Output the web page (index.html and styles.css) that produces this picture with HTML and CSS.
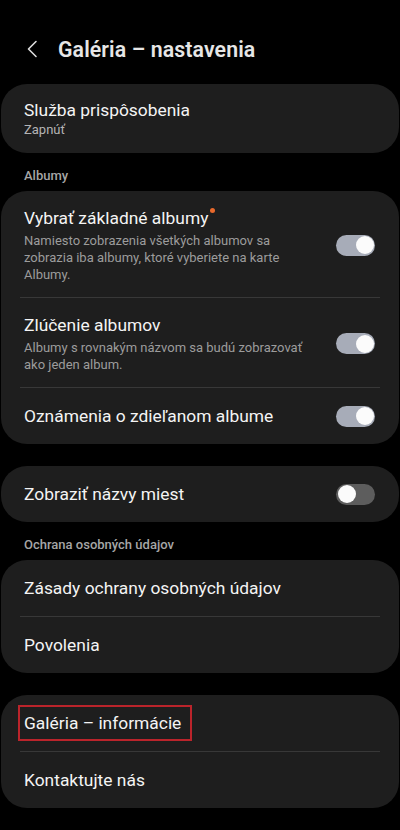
FILE: index.html
```html
<!DOCTYPE html>
<html lang="sk">
<head>
<meta charset="utf-8">
<title>Galéria – nastavenia</title>
<link rel="stylesheet" href="styles.css">
</head>
<body>
<div class="screen">
  <header class="appbar">
    <svg class="back" width="14" height="18" viewBox="0 0 14 18" aria-hidden="true">
      <polyline points="11,1.5 3.5,9 11,16.5" fill="none" stroke="#dcdcdc" stroke-width="1.6" stroke-linecap="round" stroke-linejoin="round"/>
    </svg>
    <h1 class="title">Galéria – nastavenia</h1>
  </header>

  <section class="card">
    <div class="row row-sub">
      <div class="text">
        <div class="label">Služba prispôsobenia</div>
        <div class="sub">Zapnúť</div>
      </div>
    </div>
  </section>

  <div class="section-head">Albumy</div>

  <section class="card">
    <div class="row row-desc">
      <div class="text">
        <div class="label">Vybrať základné albumy<span class="dot"></span></div>
        <div class="desc">Namiesto zobrazenia všetkých albumov sa zobrazia iba albumy, ktoré vyberiete na karte Albumy.</div>
      </div>
      <span class="switch on"><span class="knob"></span></span>
    </div>
    <div class="divider"></div>
    <div class="row row-desc">
      <div class="text">
        <div class="label">Zlúčenie albumov</div>
        <div class="desc">Albumy s rovnakým názvom sa budú zobrazovať ako jeden album.</div>
      </div>
      <span class="switch on"><span class="knob"></span></span>
    </div>
    <div class="divider"></div>
    <div class="row row-single">
      <div class="text"><div class="label">Oznámenia o zdieľanom albume</div></div>
      <span class="switch on"><span class="knob"></span></span>
    </div>
  </section>

  <section class="card gap-top">
    <div class="row row-single">
      <div class="text"><div class="label">Zobraziť názvy miest</div></div>
      <span class="switch off"><span class="knob"></span></span>
    </div>
  </section>

  <div class="section-head">Ochrana osobných údajov</div>

  <section class="card">
    <div class="row row-single">
      <div class="text"><div class="label">Zásady ochrany osobných údajov</div></div>
    </div>
    <div class="divider"></div>
    <div class="row row-single">
      <div class="text"><div class="label">Povolenia</div></div>
    </div>
  </section>

  <section class="card gap-top">
    <div class="row row-single">
      <div class="text"><div class="label"><span class="highlight">Galéria – informácie</span></div></div>
    </div>
    <div class="divider"></div>
    <div class="row row-single">
      <div class="text"><div class="label">Kontaktujte nás</div></div>
    </div>
  </section>
</div>
</body>
</html>
```

FILE: styles.css
```css
* { box-sizing: border-box; }

html, body {
  margin: 0;
  padding: 0;
  background: #000;
}

body {
  font-family: Roboto, "Noto Sans", "Liberation Sans", sans-serif;
  color: #f2f2f2;
  width: 400px;
  height: 830px;
  overflow: hidden;
}

.screen {
  padding: 0 1px;
}

.appbar {
  display: flex;
  align-items: center;
  height: 38px;
  margin-top: 30px;
  margin-bottom: 16px;
  padding-left: 24px;
}

.back {
  display: block;
  margin-right: 19px;
}

.title {
  margin: 0;
  font-size: 21.3px;
  font-weight: 600;
  color: #e6e6e6;
  letter-spacing: 0.1px;
}

.card {
  background: #1e1e1e;
  border-radius: 26px;
  overflow: hidden;
}

.gap-top {
  margin-top: 22px;
}

.section-head {
  padding: 14px 23px 6px;
  font-size: 13px;
  line-height: 18px;
  font-weight: 500;
  color: #a6a6a6;
}

.row {
  display: flex;
  align-items: center;
  padding: 0 24px 0 23px;
}

.row-sub {
  padding-top: 15px;
  padding-bottom: 14px;
}

.row-desc {
  padding-top: 16px;
  padding-bottom: 14px;
}

.row-single {
  min-height: 56px;
}

.text {
  flex: 1;
  min-width: 0;
  padding-right: 20px;
}

.label {
  font-size: 17.4px;
  line-height: 22px;
  color: #f4f4f4;
}

.sub {
  font-size: 13px;
  line-height: 18px;
  color: #b4b4b4;
}

.desc {
  margin-top: 3px;
  font-size: 13px;
  line-height: 17px;
  color: #9c9c9c;
}

.dot {
  display: inline-block;
  width: 5px;
  height: 5px;
  border-radius: 50%;
  background: #e8692c;
  vertical-align: top;
  margin-left: 2px;
  margin-top: 1px;
}

.divider {
  height: 1px;
  margin: 0 19px 0 19px;
  background: #383838;
}

.switch {
  position: relative;
  flex: none;
  width: 39px;
  height: 21px;
  border-radius: 11px;
}

.switch.on { background: #a7acb8; }
.switch.off { background: #5d5d5d; }

.knob {
  position: absolute;
  top: 1.5px;
  width: 18px;
  height: 18px;
  border-radius: 50%;
  background: #fbfbfb;
}

.switch.on .knob { right: 1.5px; }
.switch.off .knob { left: 1.5px; }

.highlight {
  position: relative;
}

.highlight::after {
  content: "";
  position: absolute;
  left: -6px;
  right: -11px;
  top: -8px;
  bottom: -8px;
  border: 2px solid #bb242b;
}
```
